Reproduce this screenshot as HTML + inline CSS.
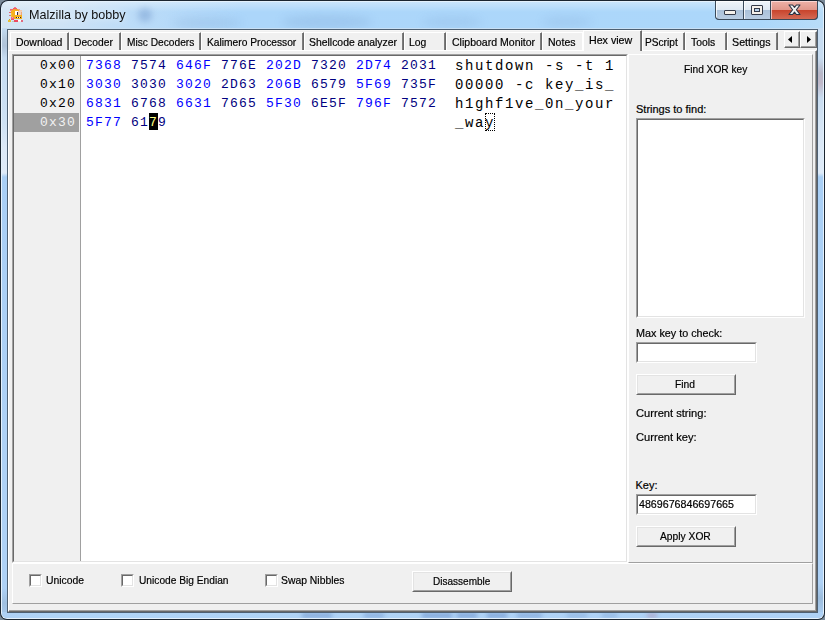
<!DOCTYPE html><html><head><meta charset="utf-8"><style>
*{margin:0;padding:0;box-sizing:border-box}
html,body{width:825px;height:620px;overflow:hidden;background:#7a8a99}
body{position:relative;font-family:"Liberation Sans",sans-serif}
.a{position:absolute}
.t{position:absolute;white-space:pre;line-height:1;font-family:"Liberation Sans",sans-serif;-webkit-text-stroke:0.2px currentColor}
.m{position:absolute;white-space:pre;font-family:"Liberation Mono",monospace;font-size:13px;line-height:19px;letter-spacing:1.2px}
</style></head><body>
<div class="a" style="left:0;top:0;width:825px;height:620px;border-radius:8px 8px 7px 7px;background:#1b2530"></div>
<div class="a" style="left:1px;top:1px;width:823px;height:618px;border-radius:7px 7px 6px 6px;background:#e4f1fc"></div>
<div class="a" style="left:2px;top:2px;width:821px;height:616px;border-radius:6px 6px 5px 5px;overflow:hidden;background:#aed2f6"><div class="a" style="left:0;top:0;width:821px;height:28px;background:linear-gradient(90deg,#d3e5f4 0px,#cfe3f5 60px,#bcdcf8 130px,#acd6fa 240px,#acd7fa 760px,#b8dcf8 821px)"></div><div class="a" style="left:0;top:0;width:821px;height:10px;background:linear-gradient(180deg,rgba(255,255,255,.35),rgba(255,255,255,0))"></div><div class="a" style="left:136px;top:6px;width:14px;height:14px;border-radius:50%;background:rgba(90,130,190,.35);filter:blur(3px)"></div><div class="a" style="left:170px;top:15px;width:70px;height:12px;border-radius:50%;background:rgba(110,150,200,.18);filter:blur(4px)"></div><div class="a" style="left:280px;top:13px;width:90px;height:14px;border-radius:50%;background:rgba(110,150,200,.22);filter:blur(4px)"></div><div class="a" style="left:420px;top:14px;width:60px;height:12px;border-radius:50%;background:rgba(110,150,200,.15);filter:blur(4px)"></div><div class="a" style="left:540px;top:14px;width:50px;height:12px;border-radius:50%;background:rgba(110,150,200,.15);filter:blur(4px)"></div><div class="a" style="left:0;top:26px;width:6px;height:592px;background:linear-gradient(180deg,#c4dcf2 0,#b4c8dc 12px,#b0c4da 18px,#c6dcf2 30px,#cfe2f4 95px,#dce9f7 120px,#dfebf8 145px,#a9cff5 149px,#aed1f5 400px,#aed1f5 560px,#a0c0e0 575px,#aed1f5 600px)"></div><div class="a" style="left:816px;top:26px;width:5px;height:592px;background:linear-gradient(180deg,#c6dcf2 0,#c8dcf0 30px,#b8b8c8 45px,#c0b8c8 55px,#c8dcf0 70px,#d4e4f4 95px,#dce9f7 120px,#dfebf8 145px,#a9cff5 149px,#aed1f5 400px,#aed1f5 555px,#9cbcdc 570px,#aed1f5 590px)"></div><div class="a" style="left:0;top:610px;width:821px;height:8px;background:linear-gradient(90deg,#aed1f5 0,#b0d4f6 50px,#aed1f5 821px)"></div><div class="a" style="left:300px;top:611px;width:30px;height:5px;background:rgba(60,100,170,0.35);filter:blur(2px)"></div><div class="a" style="left:362px;top:611px;width:20px;height:5px;background:rgba(60,100,170,0.3);filter:blur(2px)"></div><div class="a" style="left:420px;top:611px;width:30px;height:5px;background:rgba(50,90,165,0.35);filter:blur(2px)"></div><div class="a" style="left:455px;top:611px;width:20px;height:5px;background:rgba(50,90,165,0.35);filter:blur(2px)"></div><div class="a" style="left:485px;top:611px;width:20px;height:5px;background:rgba(50,90,165,0.35);filter:blur(2px)"></div><div class="a" style="left:515px;top:611px;width:25px;height:5px;background:rgba(60,100,170,0.3);filter:blur(2px)"></div><div class="a" style="left:565px;top:611px;width:20px;height:5px;background:rgba(80,120,180,0.25);filter:blur(2px)"></div><div class="a" style="left:600px;top:611px;width:15px;height:5px;background:rgba(80,120,180,0.25);filter:blur(2px)"></div><div class="a" style="left:645px;top:611px;width:10px;height:5px;background:rgba(170,90,120,0.3);filter:blur(2px)"></div></div>
<div class="a" style="left:7px;top:28px;width:811px;height:1px;background:#c8e0f5"></div>
<div class="a" style="left:7px;top:29px;width:811px;height:584px;background:#4e6072"></div>
<div class="a" style="left:8px;top:30px;width:809px;height:582px;background:#f0f0f0"></div>
<div class="a" style="left:8px;top:30px;width:809px;height:1px;background:#f6f6f6"></div>
<svg class="a" style="left:0;top:0" width="30" height="28" shape-rendering="crispEdges"><rect x="14" y="7" width="2" height="1" fill="#f07a8a"/><rect x="13" y="8" width="4" height="1" fill="#ee5a6e"/><rect x="10" y="9" width="3" height="1" fill="#ee6a78"/><rect x="13" y="9" width="6" height="1" fill="#f4a030"/><rect x="18" y="9" width="2" height="1" fill="#f0a090"/><rect x="10" y="10" width="2" height="1" fill="#f08a80"/><rect x="12" y="10" width="8" height="1" fill="#f6b020"/><rect x="19" y="10" width="3" height="1" fill="#f3c8a8"/><rect x="11" y="11" width="11" height="8" fill="#f6b020"/><rect x="18" y="11" width="4" height="4" fill="#f4d0b8"/><rect x="21" y="12" width="1" height="3" fill="#f0a878"/><rect x="15" y="11" width="3" height="4" fill="#ffffff"/><rect x="17" y="12" width="1" height="3" fill="#2a2a48"/><rect x="9" y="12" width="2" height="1" fill="#e95a70"/><rect x="9" y="15" width="2" height="1" fill="#d07a90"/><rect x="11" y="13" width="1" height="4" fill="#f2c040"/><rect x="16" y="17" width="5" height="1" fill="#2a2a2a"/><rect x="17" y="17" width="1" height="1" fill="#f8f0e0"/><rect x="19" y="17" width="1" height="1" fill="#f8f0e0"/><rect x="11" y="17" width="3" height="2" fill="#f06a80"/><rect x="12" y="17" width="1" height="1" fill="#f8a0b0"/><rect x="11" y="19" width="3" height="1" fill="#e05a70"/><rect x="8" y="20" width="3" height="2" fill="#e8c030"/><rect x="9" y="19" width="1" height="1" fill="#d0a020"/><rect x="14" y="20" width="4" height="2" fill="#ee4a60"/><rect x="18" y="20" width="3" height="1" fill="#ffffff"/><rect x="18" y="21" width="3" height="1" fill="#f0e8e8"/><rect x="21" y="20" width="2" height="2" fill="#e06a80"/><rect x="12" y="21" width="2" height="1" fill="#b8c8b8"/></svg>
<div class="t" style="left:28.68px;top:8.98px;font-size:12.4px;color:#111;transform:scaleX(1.0170);transform-origin:0 0;-webkit-text-stroke:0;text-shadow:0 0 7px rgba(255,255,255,.8);">Malzilla by bobby</div>
<div class="a" style="left:715px;top:1px;width:103px;height:19px;border:1px solid #3a4a5a;border-top:none;border-radius:0 0 4px 4px;background:#3a4a5a;overflow:hidden">
<div class="a" style="left:0;top:0;width:27px;height:18px;background:linear-gradient(180deg,#f0f5fa 0,#dfe9f3 9px,#aac1d9 9px,#b9cde2 18px);border-bottom-left-radius:3px;box-shadow:inset 1px 1px 0 rgba(255,255,255,.8)"></div>
<div class="a" style="left:28px;top:0;width:26px;height:18px;background:linear-gradient(180deg,#f0f5fa 0,#dfe9f3 9px,#aac1d9 9px,#b9cde2 18px);box-shadow:inset 1px 1px 0 rgba(255,255,255,.8)"></div>
<div class="a" style="left:55px;top:0;width:46px;height:18px;background:linear-gradient(180deg,#eeb2a8 0,#e0968a 9px,#c8432b 9px,#d46a55 18px);border-bottom-right-radius:3px;box-shadow:inset 1px 1px 0 rgba(255,230,230,.7)"></div>
</div>
<div class="a" style="left:724px;top:10px;width:12px;height:5px;background:#f4f0ea;border:1px solid #343a48;border-radius:1px"></div>
<div class="a" style="left:751px;top:5px;width:12px;height:10px;background:#f4f0ea;border:1px solid #343a48;border-radius:1px"></div>
<div class="a" style="left:754px;top:8px;width:6px;height:4px;background:#b9d2ea;border:1px solid #343a48"></div>
<svg class="a" style="left:786px;top:2px" width="18" height="16" viewBox="0 0 18 16">
<path d="M3 3 L6.6 3 L8.5 5.4 L10.4 3 L14 3 L10.4 7.75 L14 12.5 L10.4 12.5 L8.5 10.1 L6.6 12.5 L3 12.5 L6.6 7.75 Z" fill="#f2f2f2" stroke="#2c3444" stroke-width="1.1" stroke-linejoin="round"/>
</svg>
<div class="a" style="left:8px;top:50px;width:809px;height:562px;border-left:1px solid #fff;border-top:1px solid #fff;border-right:1px solid #696969;border-bottom:1px solid #696969;background:#f0f0f0"></div>
<div class="a" style="left:9px;top:51px;width:807px;height:560px;border-right:1px solid #a0a0a0;border-bottom:1px solid #a0a0a0"></div>
<div class="a" style="left:10px;top:32px;width:59px;height:18px;border-left:1px solid #fff;border-top:1px solid #fff;border-right:1px solid #696969;background:#f0f0f0"><div class="a" style="right:0;top:0;width:1px;height:17px;background:#7c7c7c"></div></div>
<div class="t" style="left:15.50px;top:36.55px;font-size:11px;color:#000;transform:scaleX(0.9490);transform-origin:0 0;">Download</div>
<div class="a" style="left:69px;top:32px;width:52px;height:18px;border-left:1px solid #fff;border-top:1px solid #fff;border-right:1px solid #696969;background:#f0f0f0"><div class="a" style="right:0;top:0;width:1px;height:17px;background:#7c7c7c"></div></div>
<div class="t" style="left:74.40px;top:36.55px;font-size:11px;color:#000;transform:scaleX(0.9333);transform-origin:0 0;">Decoder</div>
<div class="a" style="left:121px;top:32px;width:80px;height:18px;border-left:1px solid #fff;border-top:1px solid #fff;border-right:1px solid #696969;background:#f0f0f0"><div class="a" style="right:0;top:0;width:1px;height:17px;background:#7c7c7c"></div></div>
<div class="t" style="left:126.50px;top:36.55px;font-size:11px;color:#000;transform:scaleX(0.9247);transform-origin:0 0;">Misc Decoders</div>
<div class="a" style="left:201px;top:32px;width:103px;height:18px;border-left:1px solid #fff;border-top:1px solid #fff;border-right:1px solid #696969;background:#f0f0f0"><div class="a" style="right:0;top:0;width:1px;height:17px;background:#7c7c7c"></div></div>
<div class="t" style="left:206.50px;top:36.55px;font-size:11px;color:#000;transform:scaleX(0.9302);transform-origin:0 0;">Kalimero Processor</div>
<div class="a" style="left:304px;top:32px;width:100px;height:18px;border-left:1px solid #fff;border-top:1px solid #fff;border-right:1px solid #696969;background:#f0f0f0"><div class="a" style="right:0;top:0;width:1px;height:17px;background:#7c7c7c"></div></div>
<div class="t" style="left:308.50px;top:36.55px;font-size:11px;color:#000;transform:scaleX(0.9462);transform-origin:0 0;">Shellcode analyzer</div>
<div class="a" style="left:404px;top:32px;width:42px;height:18px;border-left:1px solid #fff;border-top:1px solid #fff;border-right:1px solid #696969;background:#f0f0f0"><div class="a" style="right:0;top:0;width:1px;height:17px;background:#7c7c7c"></div></div>
<div class="t" style="left:409.00px;top:36.55px;font-size:11px;color:#000;transform:scaleX(0.9444);transform-origin:0 0;">Log</div>
<div class="a" style="left:446px;top:32px;width:96px;height:18px;border-left:1px solid #fff;border-top:1px solid #fff;border-right:1px solid #696969;background:#f0f0f0"><div class="a" style="right:0;top:0;width:1px;height:17px;background:#7c7c7c"></div></div>
<div class="t" style="left:451.50px;top:36.55px;font-size:11px;color:#000;transform:scaleX(0.9575);transform-origin:0 0;">Clipboard Monitor</div>
<div class="a" style="left:542px;top:32px;width:41px;height:18px;border-left:1px solid #fff;border-top:1px solid #fff;border-right:1px solid #fff;background:#f0f0f0"></div>
<div class="t" style="left:547.50px;top:36.55px;font-size:11px;color:#000;transform:scaleX(0.9586);transform-origin:0 0;">Notes</div>
<div class="a" style="left:727px;top:32px;width:51px;height:18px;border-left:1px solid #fff;border-top:1px solid #fff;border-right:1px solid #696969;background:#f0f0f0"><div class="a" style="right:0;top:0;width:1px;height:17px;background:#7c7c7c"></div></div>
<div class="t" style="left:732.40px;top:36.55px;font-size:11px;color:#000;transform:scaleX(0.9725);transform-origin:0 0;">Settings</div>
<div class="a" style="left:642px;top:32px;width:43px;height:18px;border-left:1px solid #fff;border-top:1px solid #fff;border-right:1px solid #696969;background:#f0f0f0"><div class="a" style="right:0;top:0;width:1px;height:17px;background:#7c7c7c"></div></div>
<div class="t" style="left:645.30px;top:36.55px;font-size:11px;color:#000;transform:scaleX(0.9222);transform-origin:0 0;">PScript</div>
<div class="a" style="left:685px;top:32px;width:42px;height:18px;border-left:1px solid #fff;border-top:1px solid #fff;border-right:1px solid #696969;background:#f0f0f0"><div class="a" style="right:0;top:0;width:1px;height:17px;background:#7c7c7c"></div></div>
<div class="t" style="left:690.50px;top:36.55px;font-size:11px;color:#000;transform:scaleX(0.9423);transform-origin:0 0;">Tools</div>
<div class="a" style="left:583px;top:30px;width:59px;height:21px;border-left:1px solid #fff;border-top:1px solid #fff;border-right:1px solid #696969;background:#f0f0f0"><div class="a" style="right:0;top:0;width:1px;height:20px;background:#7c7c7c"></div></div>
<div class="t" style="left:589.40px;top:35.05px;font-size:11px;color:#000;transform:scaleX(0.9689);transform-origin:0 0;">Hex view</div>
<div class="a" style="left:784px;top:31px;width:16px;height:17px;background:#f0f0f0;border-left:1px solid #fff;border-top:1px solid #fff;border-right:1px solid #696969;border-bottom:1px solid #696969"><div class="a" style="left:0;top:0;width:14px;height:15px;border-right:1px solid #a0a0a0;border-bottom:1px solid #a0a0a0"></div></div>
<div class="a" style="left:800px;top:31px;width:17px;height:17px;background:#f0f0f0;border-left:1px solid #fff;border-top:1px solid #fff;border-right:1px solid #696969;border-bottom:1px solid #696969"><div class="a" style="left:0;top:0;width:15px;height:15px;border-right:1px solid #a0a0a0;border-bottom:1px solid #a0a0a0"></div></div>
<svg class="a" style="left:0;top:0" width="825" height="60"><path d="M792 36 L792 43 L788 39.5 Z" fill="#000"/><path d="M807 36 L807 43 L811 39.5 Z" fill="#000"/></svg>
<div class="a" style="left:12px;top:54px;width:616px;height:509px;border-left:1px solid #a0a0a0;border-top:1px solid #a0a0a0;border-right:1px solid #fff;border-bottom:1px solid #fff;background:#fff"></div>
<div class="a" style="left:13px;top:55px;width:614px;height:507px;border-left:1px solid #696969;border-top:1px solid #696969;border-right:1px solid #e3e3e3;border-bottom:1px solid #e3e3e3"></div>
<div class="a" style="left:14px;top:56px;width:67px;height:505px;background:#f0f0f0;border-right:1px solid #a0a0a0"></div>
<div class="a" style="left:14px;top:113px;width:65px;height:19px;background:#a0a0a0"></div>
<div class="m" style="left:40px;top:56px;color:#000">0x00</div>
<div class="m" style="left:40px;top:75px;color:#000">0x10</div>
<div class="m" style="left:40px;top:94px;color:#000">0x20</div>
<div class="m" style="left:40px;top:113px;color:#f2f2f2">0x30</div>
<div class="m" style="left:86px;top:56px;color:#0000ff">7368</div>
<div class="m" style="left:131px;top:56px;color:#000080">7574</div>
<div class="m" style="left:176px;top:56px;color:#0000ff">646F</div>
<div class="m" style="left:221px;top:56px;color:#000080">776E</div>
<div class="m" style="left:266px;top:56px;color:#0000ff">202D</div>
<div class="m" style="left:311px;top:56px;color:#000080">7320</div>
<div class="m" style="left:356px;top:56px;color:#0000ff">2D74</div>
<div class="m" style="left:401px;top:56px;color:#000080">2031</div>
<div class="m" style="left:455px;top:57px;color:#000;font-size:14px;letter-spacing:1.6px">shutdown -s -t 1</div>
<div class="m" style="left:86px;top:75px;color:#0000ff">3030</div>
<div class="m" style="left:131px;top:75px;color:#000080">3030</div>
<div class="m" style="left:176px;top:75px;color:#0000ff">3020</div>
<div class="m" style="left:221px;top:75px;color:#000080">2D63</div>
<div class="m" style="left:266px;top:75px;color:#0000ff">206B</div>
<div class="m" style="left:311px;top:75px;color:#000080">6579</div>
<div class="m" style="left:356px;top:75px;color:#0000ff">5F69</div>
<div class="m" style="left:401px;top:75px;color:#000080">735F</div>
<div class="m" style="left:455px;top:76px;color:#000;font-size:14px;letter-spacing:1.6px">00000 -c key_is_</div>
<div class="m" style="left:86px;top:94px;color:#0000ff">6831</div>
<div class="m" style="left:131px;top:94px;color:#000080">6768</div>
<div class="m" style="left:176px;top:94px;color:#0000ff">6631</div>
<div class="m" style="left:221px;top:94px;color:#000080">7665</div>
<div class="m" style="left:266px;top:94px;color:#0000ff">5F30</div>
<div class="m" style="left:311px;top:94px;color:#000080">6E5F</div>
<div class="m" style="left:356px;top:94px;color:#0000ff">796F</div>
<div class="m" style="left:401px;top:94px;color:#000080">7572</div>
<div class="m" style="left:455px;top:95px;color:#000;font-size:14px;letter-spacing:1.6px">h1ghf1ve_0n_your</div>
<div class="m" style="left:86px;top:113px;color:#0000ff">5F77</div>
<div class="a" style="left:149px;top:113px;width:9px;height:17px;background:#000"></div>
<div class="m" style="left:131px;top:113px;color:#000080">61<span style="color:#ffff80">7</span>9</div>
<div class="m" style="left:455px;top:114px;color:#000;font-size:14px;letter-spacing:1.6px">_way</div>
<div class="a" style="left:485px;top:113px;width:10px;height:18px;border:1px dotted #000"></div>
<div class="a" style="left:628px;top:54px;width:185px;height:509px;border-left:1px solid #fff;border-top:1px solid #fff;border-right:1px solid #a0a0a0;border-bottom:1px solid #a0a0a0"></div>
<div class="t" style="left:683.60px;top:63.95px;font-size:11px;color:#000;transform:scaleX(0.9246);transform-origin:0 0;">Find XOR key</div>
<div class="t" style="left:636.00px;top:103.84px;font-size:11px;color:#000;">Strings to find:</div>
<div class="a" style="left:636px;top:118px;width:169px;height:200px;background:#fff;border-left:1px solid #a0a0a0;border-top:1px solid #a0a0a0;border-right:1px solid #fff;border-bottom:1px solid #fff"><div class="a" style="left:0;top:0;right:0;bottom:0;border-left:1px solid #696969;border-top:1px solid #696969;border-right:1px solid #e3e3e3;border-bottom:1px solid #e3e3e3"></div></div>
<div class="t" style="left:635.50px;top:327.85px;font-size:11px;color:#000;transform:scaleX(0.9807);transform-origin:0 0;">Max key to check:</div>
<div class="a" style="left:636px;top:342px;width:121px;height:21px;background:#fff;border-left:1px solid #a0a0a0;border-top:1px solid #a0a0a0;border-right:1px solid #fff;border-bottom:1px solid #fff"><div class="a" style="left:0;top:0;right:0;bottom:0;border-left:1px solid #696969;border-top:1px solid #696969;border-right:1px solid #e3e3e3;border-bottom:1px solid #e3e3e3"></div></div>
<div class="a" style="left:636px;top:374px;width:100px;height:21px;background:#f0f0f0;border-left:1px solid #fff;border-top:1px solid #fff;border-right:1px solid #696969;border-bottom:1px solid #696969"><div class="a" style="left:0;top:0;right:0;bottom:0;border-left:1px solid #e3e3e3;border-top:1px solid #e3e3e3;border-right:1px solid #a0a0a0;border-bottom:1px solid #a0a0a0"></div></div>
<div class="t" style="left:675.40px;top:378.85px;font-size:11px;color:#000;transform:scaleX(0.9333);transform-origin:0 0;">Find</div>
<div class="t" style="left:636.00px;top:407.65px;font-size:11px;color:#000;transform:scaleX(1.0116);transform-origin:0 0;">Current string:</div>
<div class="t" style="left:636.00px;top:431.85px;font-size:11px;color:#000;transform:scaleX(1.0119);transform-origin:0 0;">Current key:</div>
<div class="t" style="left:635.50px;top:480.25px;font-size:11px;color:#000;">Key:</div>
<div class="a" style="left:636px;top:494px;width:121px;height:21px;background:#fff;border-left:1px solid #a0a0a0;border-top:1px solid #a0a0a0;border-right:1px solid #fff;border-bottom:1px solid #fff"><div class="a" style="left:0;top:0;right:0;bottom:0;border-left:1px solid #696969;border-top:1px solid #696969;border-right:1px solid #e3e3e3;border-bottom:1px solid #e3e3e3"></div></div>
<div class="t" style="left:639.40px;top:498.85px;font-size:11px;color:#000;transform:scaleX(0.9704);transform-origin:0 0;">4869676846697665</div>
<div class="a" style="left:636px;top:526px;width:100px;height:21px;background:#f0f0f0;border-left:1px solid #fff;border-top:1px solid #fff;border-right:1px solid #696969;border-bottom:1px solid #696969"><div class="a" style="left:0;top:0;right:0;bottom:0;border-left:1px solid #e3e3e3;border-top:1px solid #e3e3e3;border-right:1px solid #a0a0a0;border-bottom:1px solid #a0a0a0"></div></div>
<div class="t" style="left:660.00px;top:530.84px;font-size:11px;color:#000;transform:scaleX(0.9333);transform-origin:0 0;">Apply XOR</div>
<div class="a" style="left:12px;top:563px;width:801px;height:41px;border-left:1px solid #fff;border-top:1px solid #fff;border-right:1px solid #a0a0a0;border-bottom:1px solid #a0a0a0"></div>
<div class="a" style="left:29px;top:574px;width:13px;height:13px;background:#fff;border-left:1px solid #a0a0a0;border-top:1px solid #a0a0a0;border-right:1px solid #fff;border-bottom:1px solid #fff"><div class="a" style="left:0;top:0;right:0;bottom:0;border-left:1px solid #696969;border-top:1px solid #696969;border-right:1px solid #e3e3e3;border-bottom:1px solid #e3e3e3"></div></div>
<div class="t" style="left:46.30px;top:575.04px;font-size:11px;color:#000;transform:scaleX(0.9425);transform-origin:0 0;">Unicode</div>
<div class="a" style="left:121px;top:574px;width:13px;height:13px;background:#fff;border-left:1px solid #a0a0a0;border-top:1px solid #a0a0a0;border-right:1px solid #fff;border-bottom:1px solid #fff"><div class="a" style="left:0;top:0;right:0;bottom:0;border-left:1px solid #696969;border-top:1px solid #696969;border-right:1px solid #e3e3e3;border-bottom:1px solid #e3e3e3"></div></div>
<div class="t" style="left:138.80px;top:575.04px;font-size:11px;color:#000;transform:scaleX(0.9260);transform-origin:0 0;">Unicode Big Endian</div>
<div class="a" style="left:265px;top:574px;width:13px;height:13px;background:#fff;border-left:1px solid #a0a0a0;border-top:1px solid #a0a0a0;border-right:1px solid #fff;border-bottom:1px solid #fff"><div class="a" style="left:0;top:0;right:0;bottom:0;border-left:1px solid #696969;border-top:1px solid #696969;border-right:1px solid #e3e3e3;border-bottom:1px solid #e3e3e3"></div></div>
<div class="t" style="left:281.30px;top:575.04px;font-size:11px;color:#000;transform:scaleX(0.9433);transform-origin:0 0;">Swap Nibbles</div>
<div class="a" style="left:412px;top:571px;width:100px;height:21px;background:#f0f0f0;border-left:1px solid #fff;border-top:1px solid #fff;border-right:1px solid #696969;border-bottom:1px solid #696969"><div class="a" style="left:0;top:0;right:0;bottom:0;border-left:1px solid #e3e3e3;border-top:1px solid #e3e3e3;border-right:1px solid #a0a0a0;border-bottom:1px solid #a0a0a0"></div></div>
<div class="t" style="left:432.60px;top:576.04px;font-size:11px;color:#000;transform:scaleX(0.9111);transform-origin:0 0;">Disassemble</div>
</body></html>
